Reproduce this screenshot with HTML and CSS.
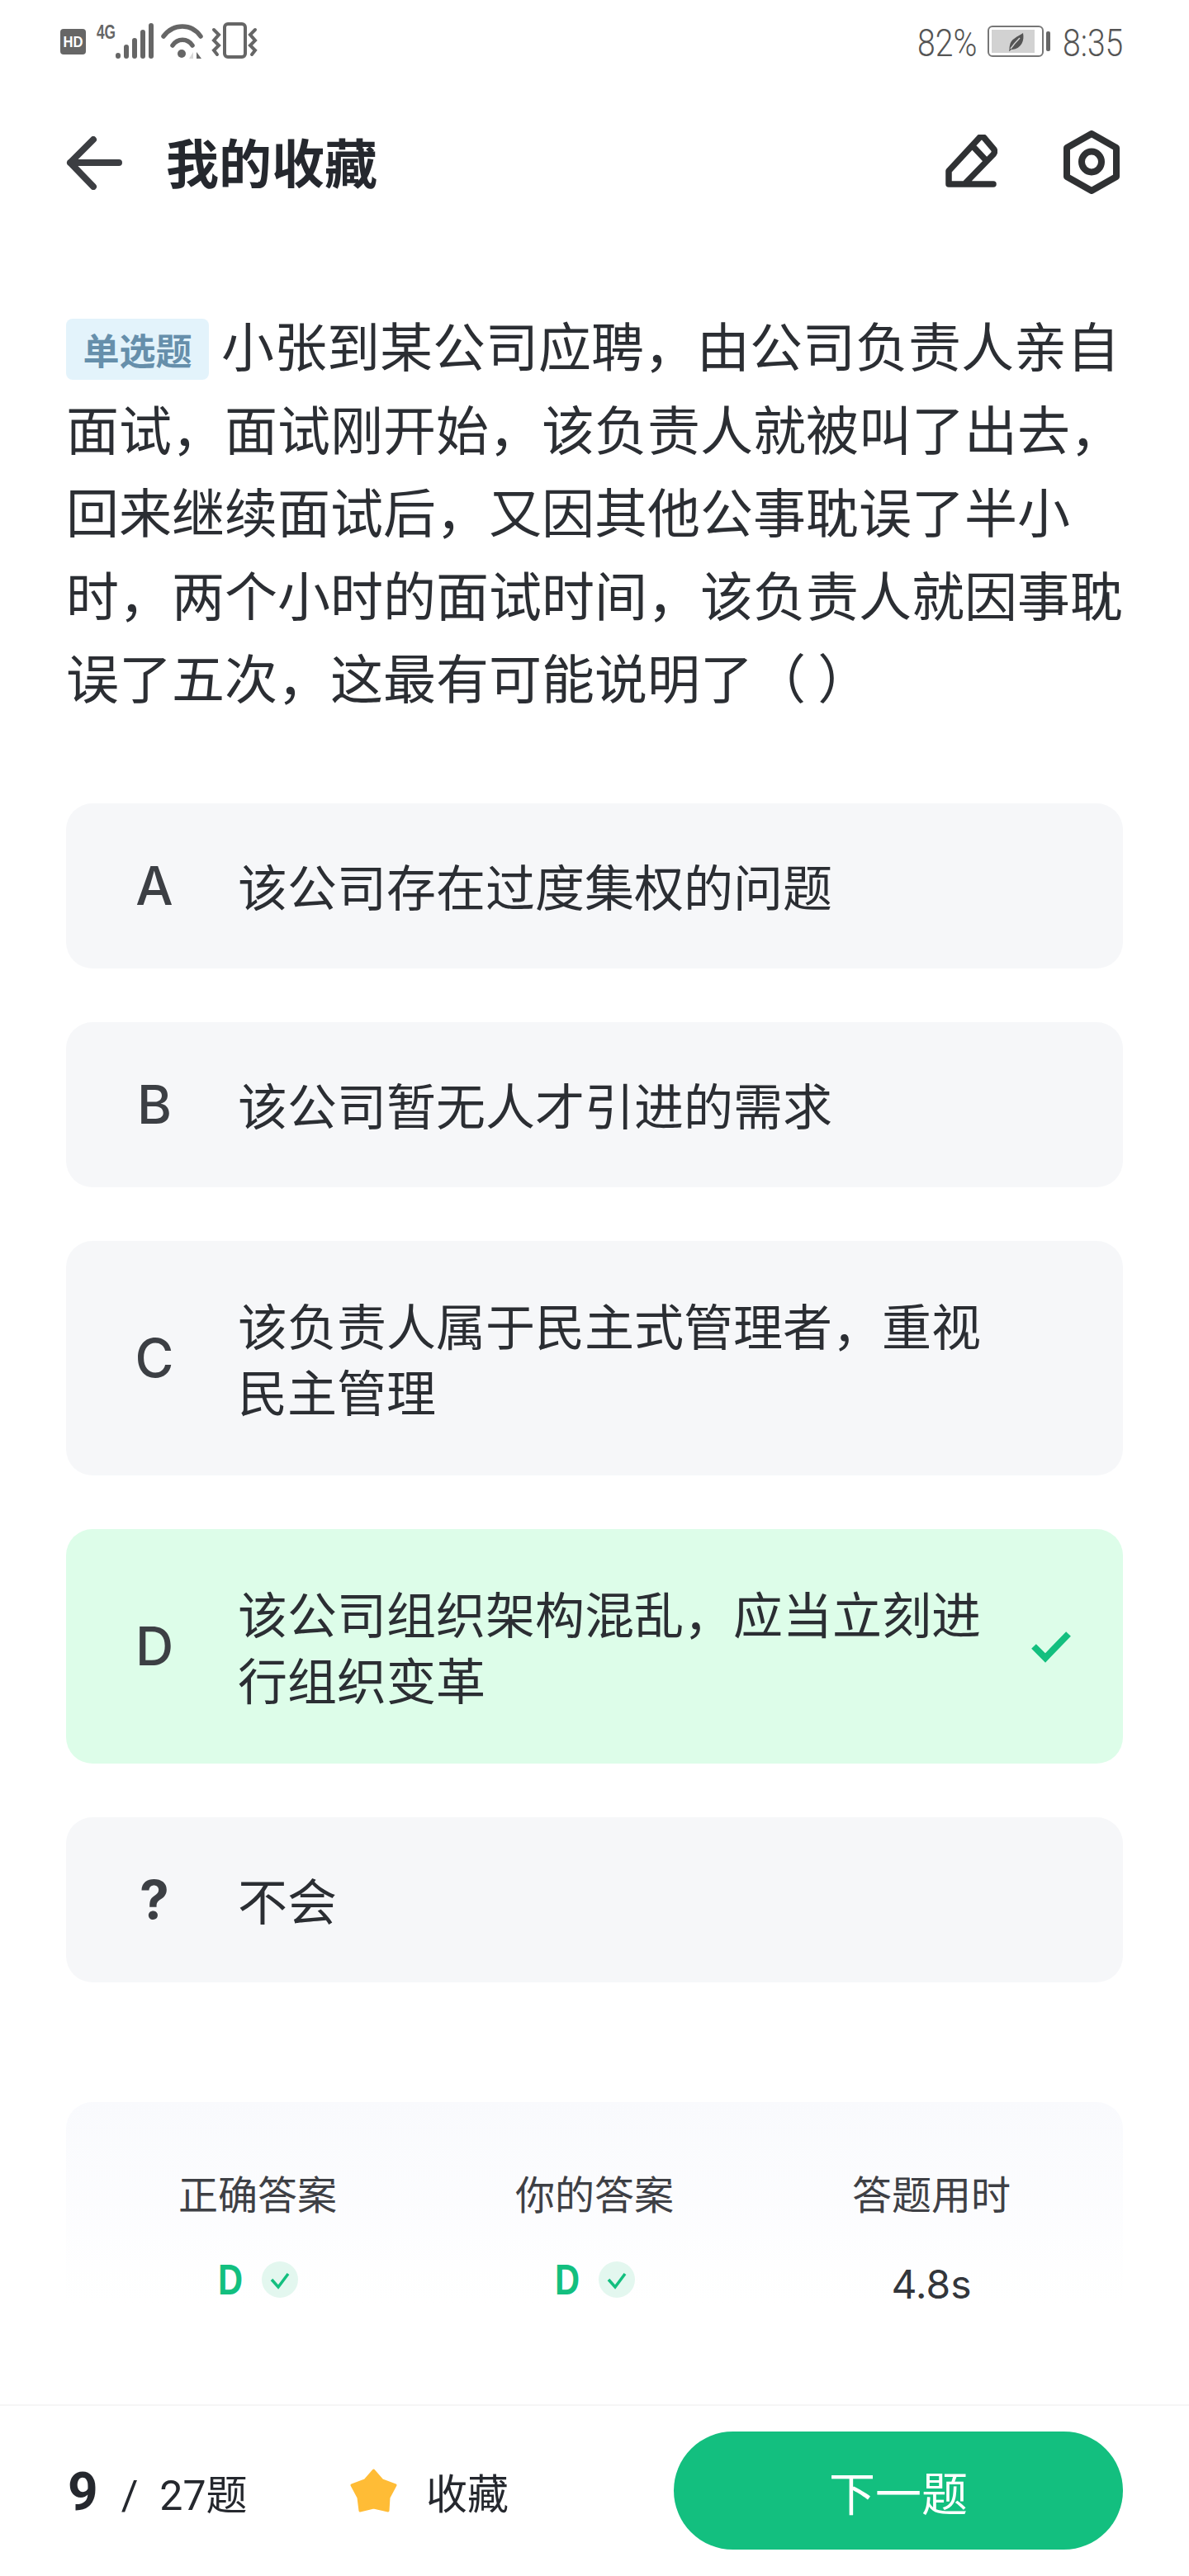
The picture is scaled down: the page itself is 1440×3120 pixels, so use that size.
FILE: index.html
```html
<!DOCTYPE html>
<html lang="zh-CN">
<head>
    <meta charset="UTF-8">
    <title>我的收藏</title>
    <link rel="stylesheet" href="styles.css">
</head>
<body>
<div class="page">
    <div class="status-bar">
        <svg class="status-left" width="240" height="48" viewBox="73 26 240 48">
            <rect x="73" y="35" width="31" height="31" rx="4" fill="#666"/>
            <text x="88.5" y="57" class="hd-text" textLength="24" lengthAdjust="spacingAndGlyphs">HD</text>
            <text x="117" y="47" class="net-text" textLength="23" lengthAdjust="spacingAndGlyphs">4G</text>
            <g stroke="#666" stroke-width="6" stroke-linecap="round">
                <path d="M143 67V68M153 57V68M163 49V68M173 39V68M183 31V68"/>
            </g>
            <g fill="none" stroke="#666" stroke-width="5.500" stroke-linecap="round">
                <path d="M198 44C210 28 232 28 243 44"/>
                <path d="M209 55C215 46 227 46 233 55"/>
            </g>
            <circle cx="220" cy="65" r="5" fill="#666"/>
            <path d="M234 63V71H229Z" fill="#d8d8d8"/>
            <path d="M238 63V71H244Z" fill="#666"/>
            <rect x="272" y="29" width="25" height="40" rx="4" fill="none" stroke="#666" stroke-width="4"/>
            <g fill="none" stroke="#666" stroke-width="4" stroke-linecap="round">
                <path d="M259 36L265 42L259 49L265 55L259 61L263 66"/>
                <path d="M309 36L303 42L309 49L303 55L309 61L305 66"/>
            </g>
        </svg>
        <div class="status-right">
            <span class="battery-level">82%</span>
            <svg class="battery" width="77" height="38" viewBox="0 0 77 38">
                <rect x="1" y="1" width="66" height="36" rx="5" fill="#fff" stroke="#777" stroke-width="2"/>
                <rect x="5" y="5" width="52" height="28" fill="#d2d2d2"/>
                <path d="M43 9C45 18 41 28 30 29C27 29 28 31 26 31C27 29 26 28 27 24C28 16 36 14 43 9Z" fill="#555"/>
                <path d="M28 28Q33 21 39 15" fill="none" stroke="#d2d2d2" stroke-width="1.500"/>
                <rect x="71" y="7" width="5" height="24" rx="2" fill="#666"/>
            </svg>
            <span class="clock">8:35</span>
        </div>
    </div>

    <div class="nav">
        <svg class="back-icon" width="68" height="65" viewBox="0 0 68 65">
            <path d="M64 32H5M33 4L5 32L33 61" fill="none" stroke="#3c3e42" stroke-width="8" stroke-linecap="round" stroke-linejoin="round"/>
        </svg>
        <span class="nav-title">我的收藏</span>
        <svg class="edit-icon" width="63" height="64" viewBox="0 0 63 64">
            <path d="M4 60V44L41 4Q44 1 47 4L58 17Q61 20 58 24L24 59M4 60H58M34 15L49 31" fill="none" stroke="#2f3133" stroke-width="7.500" stroke-linecap="round" stroke-linejoin="round"/>
        </svg>
        <svg class="hex-icon" width="68" height="77" viewBox="0 0 68 77">
            <path d="M34 4L64 21V56L34 73L4 56V21Z" fill="none" stroke="#2f3133" stroke-width="8" stroke-linejoin="round"/>
            <ellipse cx="34" cy="38" rx="12" ry="12.500" fill="none" stroke="#2f3133" stroke-width="8"/>
        </svg>
    </div>

    <div class="question">
        <span class="badge">单选题</span>小张到某公司应聘，由公司负责人亲自面试，面试刚开始，该负责人就被叫了出去，回来继续面试后，又因其他公事耽误了半小时，两个小时的面试时间，该负责人就因事耽误了五次，这最有可能说明了（ ）
    </div>

    <div class="options">
        <div class="option">
            <span class="option-key">A</span>
            <span class="option-text">该公司存在过度集权的问题</span>
        </div>
        <div class="option">
            <span class="option-key">B</span>
            <span class="option-text">该公司暂无人才引进的需求</span>
        </div>
        <div class="option option-long">
            <span class="option-key">C</span>
            <span class="option-text">该负责人属于民主式管理者，重视民主管理</span>
        </div>
        <div class="option option-long option-right">
            <span class="option-key">D</span>
            <span class="option-text">该公司组织架构混乱，应当立刻进行组织变革</span>
            <svg class="option-check" width="50" height="40" viewBox="0 0 50 40">
                <path d="M4 20L18 34L46 5" fill="none" stroke="#13bf7f" stroke-width="8"/>
            </svg>
        </div>
        <div class="option">
            <span class="option-key option-key-bold">?</span>
            <span class="option-text">不会</span>
        </div>
    </div>

    <div class="result">
        <div class="result-col">
            <span class="result-label">正确答案</span>
            <div class="result-value">
                <span class="answer">D</span>
                <svg class="answer-check" width="44" height="44" viewBox="0 0 44 44">
                    <circle cx="22" cy="22" r="22" fill="#e3f7ef"/>
                    <path d="M12 22L20 31L32 15" fill="none" stroke="#13bf7f" stroke-width="3.500"/>
                </svg>
            </div>
        </div>
        <div class="result-col">
            <span class="result-label">你的答案</span>
            <div class="result-value">
                <span class="answer">D</span>
                <svg class="answer-check" width="44" height="44" viewBox="0 0 44 44">
                    <circle cx="22" cy="22" r="22" fill="#e3f7ef"/>
                    <path d="M12 22L20 31L32 15" fill="none" stroke="#13bf7f" stroke-width="3.500"/>
                </svg>
            </div>
        </div>
        <div class="result-col">
            <span class="result-label">答题用时</span>
            <div class="result-value">
                <span class="time-used">4.8s</span>
            </div>
        </div>
    </div>

    <div class="footer">
        <div class="counter">
            <span class="counter-now">9</span>
            <span class="counter-slash">/</span>
            <span class="counter-total">27题</span>
        </div>
        <div class="collect">
            <svg class="star" width="58" height="55" viewBox="0 0 58 55">
                <path d="M28.500 3L39 15L55 21L47 36L46 52L28.500 48L12 52L10 36L2 21L18 15Z" fill="#ffbc36" stroke="#ffbc36" stroke-width="3" stroke-linejoin="round"/>
            </svg>
            <span>收藏</span>
        </div>
        <button class="next-button">下一题</button>
    </div>
</div>
</body>
</html>
```

FILE: styles.css
```css
body {
    margin: 0;
    background: #fff;
    font-family: "Noto Sans CJK SC", "Noto Sans", sans-serif;
    color: #25282e;
}

.page {
    width: 1440px;
    height: 3120px;
    overflow: hidden;
}

.status-bar {
    display: flex;
    justify-content: space-between;
    height: 100px;
    padding: 26px 77px 0 73px;
    box-sizing: border-box;
}

.status-left {
    display: block;
}

.hd-text {
    font-family: "Liberation Sans", sans-serif;
    font-size: 19px;
    font-weight: 700;
    fill: #fff;
    text-anchor: middle;
}

.net-text {
    font-family: "Liberation Sans", sans-serif;
    font-size: 24px;
    font-weight: 700;
    fill: #666;
}

.status-right {
    display: flex;
    height: 48px;
    font-family: Roboto, sans-serif;
    font-size: 46px;
    font-weight: 300;
    line-height: 53px;
    color: #555;
}

.battery-level,
.clock {
    white-space: nowrap;
    transform: scaleX(.85);
    transform-origin: left;
}

.battery-level {
    width: 72px;
}

.clock {
    width: 76px;
}

.battery {
    margin: 5px 14px 0 13px;
}

.nav {
    display: flex;
    align-items: center;
    height: 194px;
    padding: 0 84px 0 80px;
}

.nav-title {
    margin: -6px 0 0 53px;
    font-size: 64px;
    font-weight: 700;
    line-height: 80px;
    flex: 1;
}

.edit-icon {
    margin-top: -4px;
}

.hex-icon {
    margin: -2px 0 0 80px;
}

.question {
    width: 1280px;
    margin: 72px 0 0 80px;
    font-size: 64px;
    line-height: 100.5px;
    color: #2b2e33;
}

.badge {
    display: inline-block;
    width: 173px;
    height: 74px;
    margin-right: 15px;
    background: #e3f3fb;
    border-radius: 8px;
    font-size: 44px;
    font-weight: 700;
    line-height: 74px;
    text-align: center;
    vertical-align: 2px;
    color: #668fab;
}

.options {
    display: flex;
    flex-direction: column;
    gap: 65px;
    width: 1280px;
    margin: 104px 0 0 80px;
}

.option {
    display: flex;
    align-items: center;
    padding: 60px 0 60px 67px;
    background: #f6f7f9;
    border-radius: 32px;
    font-size: 60px;
    line-height: 80px;
}

.option-long {
    padding-top: 63px;
    padding-bottom: 63px;
}

.option-right {
    background: #ddfde9;
}

.option-key {
    width: 80px;
    margin-right: 61px;
    font-family: Inter, sans-serif;
    font-size: 64px;
    font-weight: 500;
    text-align: center;
    color: #3c3f44;
}

.option-key-bold {
    font-weight: 700;
}

.option-text {
    width: 922px;
    margin-top: -2px;
    color: #2b2e33;
}

.option-check {
    margin-left: 38px;
}

.result {
    display: flex;
    height: 244px;
    margin: 145px 80px 0;
    padding: 0 28px;
    background: linear-gradient(#f9fafd, #fff);
    border-radius: 32px 32px 0 0;
}

.result-col {
    display: flex;
    flex: 1;
    flex-direction: column;
    align-items: center;
    padding-top: 73px;
}

.result-label {
    font-size: 48px;
    line-height: 72px;
    color: #3e4045;
}

.result-value {
    display: flex;
    align-items: center;
    gap: 15px;
    height: 60px;
    margin-top: 40px;
}

.answer {
    width: 38px;
    font-family: "Liberation Sans", sans-serif;
    font-size: 52px;
    font-weight: 700;
    color: #13bf7f;
    transform: scaleX(.8);
    transform-origin: left;
}

.time-used {
    padding-top: 12px;
    font-family: Inter, sans-serif;
    font-size: 48px;
    color: #33363b;
}

.footer {
    display: flex;
    align-items: center;
    height: 208px;
    margin-top: 122px;
    padding: 0 80px;
    box-sizing: border-box;
    border-top: 2px solid #f6f6f6;
}

.counter {
    display: flex;
    align-items: baseline;
    width: 344px;
    margin-top: 4px;
    font-family: Roboto, "Noto Sans CJK SC", sans-serif;
    font-size: 50px;
}

.counter-now {
    margin-left: 2px;
    font-size: 64px;
    font-weight: 700;
}

.counter-slash {
    margin-left: 28px;
}

.counter-total {
    margin-left: 26px;
}

.collect {
    display: flex;
    align-items: center;
    width: 392px;
    font-size: 50px;
}

.collect span {
    margin-left: 34px;
}

.next-button {
    width: 544px;
    height: 143px;
    border: 0;
    border-radius: 72px;
    background: #13bf7f;
    font-family: "Noto Sans CJK SC", sans-serif;
    font-size: 56px;
    color: #fff;
}
```
